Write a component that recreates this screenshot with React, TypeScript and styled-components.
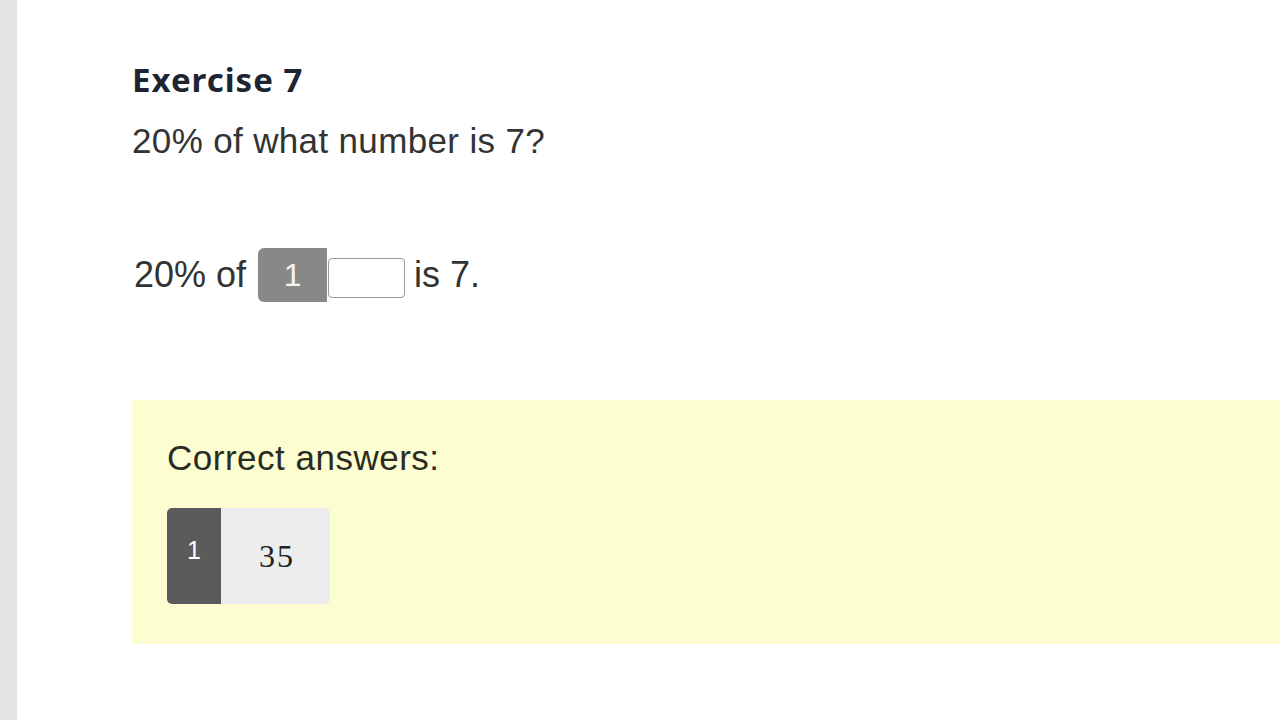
import React from 'react';
import styled, { createGlobalStyle } from 'styled-components';

const GlobalStyle = createGlobalStyle`
  html, body {
    margin: 0;
    padding: 0;
    background: #fff;
  }
  body {
    font-family: "Liberation Sans", Arial, sans-serif;
  }
`

const Layout = styled.div`
  display: flex;
  width: 1280px;
  height: 720px;
  overflow: hidden;
`

const SideStrip = styled.aside`
  width: 17px;
  flex-shrink: 0;
  background: #e4e4e4;
`

const Main = styled.main`
  flex-grow: 1;
  background: #fff;
  padding: 60px 0 0 115px;
`

const Title = styled.h2`
  margin: 0;
  font-family: "Noto Sans", "Open Sans", sans-serif;
  font-weight: 700;
  font-size: 33px;
  line-height: 40px;
  letter-spacing: 1px;
  color: #1e2432;
`

const Question = styled.p`
  margin: 21px 0 0;
  font-size: 35px;
  line-height: 40px;
  letter-spacing: 0.35px;
  color: #333;
`

const BlankRow = styled.div`
  display: flex;
  align-items: center;
  height: 54px;
  margin-top: 87px;
  padding-left: 2px;
  font-size: 36px;
  color: #333;
  > span{
    line-height: 36px;
    white-space: pre;
  }
`

const BlankIndex = styled.div`
  display: flex;
  align-items: center;
  justify-content: center;
  width: 69px;
  height: 54px;
  margin-left: 12px;
  background: #888;
  border-radius: 6px 0 0 6px;
  color: #f4f4f4;
  font-size: 32px;
`

const BlankInput = styled.input`
  box-sizing: border-box;
  align-self: flex-end;
  width: 77px;
  height: 40px;
  margin: 0 9px 4px 1px;
  border: 1.5px solid #9a9a9a;
  border-radius: 4px;
  background: #fff;
  outline: none;
`

const AnswerPanel = styled.section`
  margin-top: 98px;
  height: 244px;
  box-sizing: border-box;
  padding: 38px 0 0 35px;
  background: #fcfdd1;
`

const PanelTitle = styled.h3`
  margin: 0;
  font-weight: 400;
  font-size: 35px;
  line-height: 40px;
  letter-spacing: 0.5px;
  color: #2b2b22;
`

const AnswerChip = styled.div`
  display: flex;
  width: 163px;
  height: 96px;
  margin-top: 30px;
  border-radius: 5px;
  overflow: hidden;
`

const ChipIndex = styled.div`
  width: 54px;
  padding-top: 30px;
  box-sizing: border-box;
  background: #5b5b5b;
  color: #fff;
  font-size: 25px;
  line-height: 25px;
  text-align: center;
`

const ChipValue = styled.div`
  flex-grow: 1;
  display: flex;
  align-items: center;
  justify-content: center;
  padding-left: 3px;
  background: #ededed;
  font-family: "Liberation Serif", "DejaVu Serif", serif;
  font-size: 32px;
  letter-spacing: 2px;
  color: #222;
`

const App = () => {
  return (
    <>
      <GlobalStyle/>
      <Layout>
        <SideStrip/>
        <Main>
          <Title>Exercise 7</Title>
          <Question>20% of what number is 7?</Question>
          <BlankRow>
            <span>20% of</span>
            <BlankIndex>1</BlankIndex>
            <BlankInput type="text"/>
            <span>is 7.</span>
          </BlankRow>
          <AnswerPanel>
            <PanelTitle>Correct answers:</PanelTitle>
            <AnswerChip>
              <ChipIndex>1</ChipIndex>
              <ChipValue>35</ChipValue>
            </AnswerChip>
          </AnswerPanel>
        </Main>
      </Layout>
    </>
  )
};
export default App
